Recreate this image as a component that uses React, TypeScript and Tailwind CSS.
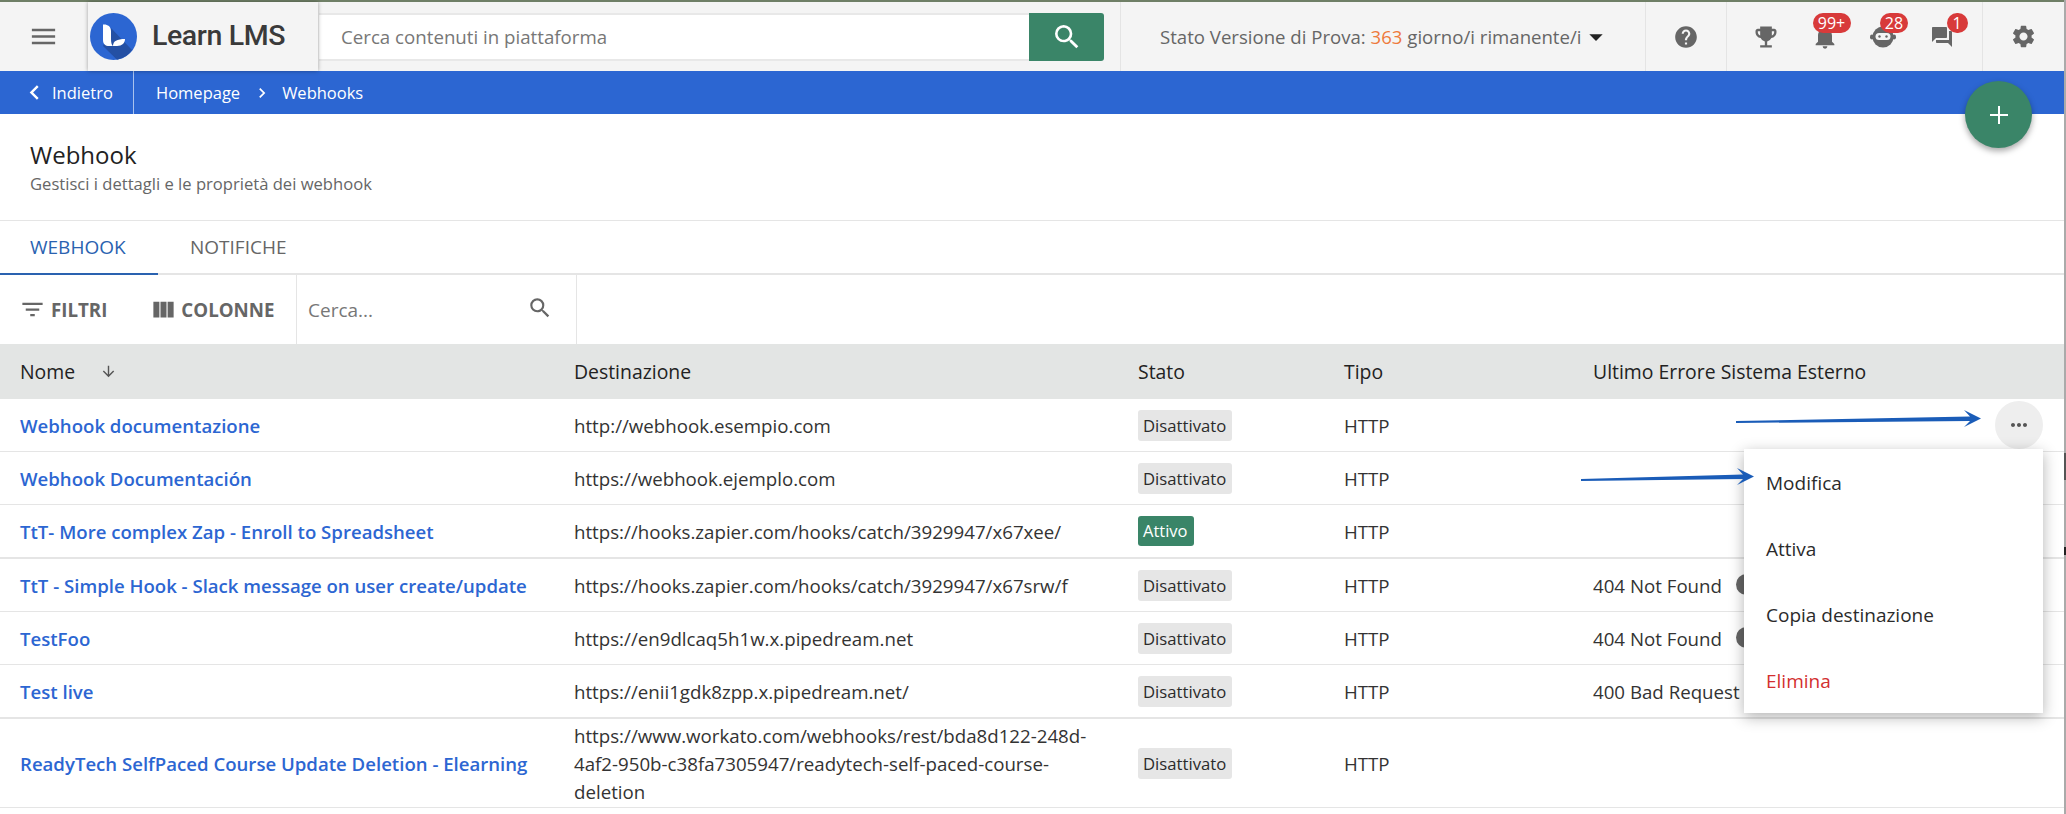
import {
  MdArrowDownward,
  MdArrowDropDown,
  MdChevronLeft,
  MdChevronRight,
  MdEmojiEvents,
  MdFilterList,
  MdForum,
  MdHelp,
  MdMenu,
  MdMoreHoriz,
  MdNotifications,
  MdSearch,
  MdSettings,
  MdViewColumn,
} from "react-icons/md";

interface Webhook {
  name: string;
  destination: string;
  active?: boolean;
  error?: string;
  errorDot?: boolean;
  thick?: boolean;
}

const webhooks: Webhook[] = [
  { name: "Webhook documentazione", destination: "http://webhook.esempio.com" },
  { name: "Webhook Documentación", destination: "https://webhook.ejemplo.com" },
  {
    name: "TtT- More complex Zap - Enroll to Spreadsheet",
    destination: "https://hooks.zapier.com/hooks/catch/3929947/x67xee/",
    active: true,
    thick: true,
  },
  {
    name: "TtT - Simple Hook - Slack message on user create/update",
    destination: "https://hooks.zapier.com/hooks/catch/3929947/x67srw/f",
    error: "404 Not Found",
    errorDot: true,
  },
  {
    name: "TestFoo",
    destination: "https://en9dlcaq5h1w.x.pipedream.net",
    error: "404 Not Found",
    errorDot: true,
  },
  {
    name: "Test live",
    destination: "https://enii1gdk8zpp.x.pipedream.net/",
    error: "400 Bad Request",
    thick: true,
  },
  {
    name: "ReadyTech SelfPaced Course Update Deletion - Elearning",
    destination:
      "https://www.workato.com/webhooks/rest/bda8d122-248d-4af2-950b-c38fa7305947/readytech-self-paced-course-deletion",
  },
];

function LogoMark() {
  return (
    <svg width="47" height="47" viewBox="0 0 47 47">
      <circle cx="23.5" cy="23.5" r="23.5" fill="#2c66d2" />
      <path d="M21 15 L42 37 A23.5 23.5 0 0 1 27 46.7 L13 33 Z" fill="#2450a4" />
      <path d="M13 11.5 C17 11 21 13 21 18 V26 C21 29 21.5 32 23 33 H19 C15.5 33 13 31 13 27 Z" fill="#fff" />
      <path d="M23 33 C23 28 27 26 35 26 C35 30 32 33 27 33 Z" fill="#fff" />
    </svg>
  );
}

function BotIcon() {
  return (
    <svg width="26" height="22" viewBox="0 0 26 22">
      <circle cx="13" cy="11" r="10.5" fill="#666" />
      <rect x="0" y="8.5" width="4" height="5" rx="2" fill="#666" />
      <rect x="22" y="8.5" width="4" height="5" rx="2" fill="#666" />
      <rect x="5.5" y="7" width="15" height="7" rx="3.5" fill="#f4f4f4" />
      <circle cx="9.5" cy="10.5" r="1.2" fill="#666" />
      <circle cx="16.5" cy="10.5" r="1.2" fill="#666" />
    </svg>
  );
}

function Annotation({ className, width }: { className: string; width: number }) {
  return (
    <svg
      className={`absolute pointer-events-none ${className}`}
      width={width}
      height="20"
      viewBox={`0 0 ${width} 20`}
    >
      <path
        d={`M0 12 L${width - 11} 7.5 L${width - 17} 1 L${width} 9.5 L${width - 17} 18 L${width - 11} 12 L0 14 Z`}
        fill="#1a5cb8"
      />
    </svg>
  );
}

function Badge({ className, children }: { className: string; children: string }) {
  return (
    <span
      className={`absolute top-[11px] h-[20px] rounded-full bg-[#d83a3a] text-white text-[16px] leading-[20px] text-center ${className}`}
    >
      {children}
    </span>
  );
}

function StatusChip({ active }: { active?: boolean }) {
  return active ? (
    <span className="inline-block rounded-[3px] bg-[#3a8568] text-white text-[16.5px] leading-[30px] pl-[5px] pr-[6px]">
      Attivo
    </span>
  ) : (
    <span className="inline-block rounded-[3px] bg-[#e6e6e6] text-[#2b2b2b] font-medium text-[16.7px] leading-[31px] pl-[5px] pr-[6px]">
      Disattivato
    </span>
  );
}

export default function App() {
  return (
    <div className="relative flex w-[2066px] h-[814px] overflow-hidden bg-white font-['Open_Sans',sans-serif] text-[#333]">
      <div className="w-[2064px] shrink-0 flex flex-col">
        {/* Top bar */}
        <header className="flex h-[71px] shrink-0 bg-[#f4f4f4] border-t-2 border-[#6f7f66]">
          <div className="w-[88px] flex items-center pl-[28px] text-[#666]">
            <MdMenu size={31} />
          </div>
          <div className="w-[230px] z-10 flex items-center gap-[15px] pl-[2px] bg-[#f4f4f4] shadow-[0_0_4px_rgba(0,0,0,0.35)]">
            <LogoMark />
            <span className="font-['Roboto',sans-serif] font-medium text-[28.5px] tracking-[-0.4px] text-[#3a3a3a]">
              Learn LMS
            </span>
          </div>
          <div className="w-[710px] ml-[1px] mt-[11px] h-[48px] bg-white border-y-2 border-[#e8e8e8] flex items-center pl-[22px] text-[18.7px] text-[#777]">
            Cerca contenuti in piattaforma
          </div>
          <div className="w-[75px] mt-[11px] h-[48px] bg-[#3a8568] rounded-r-[3px] flex items-center justify-center text-white">
            <MdSearch size={32} />
          </div>
          <div className="ml-[16px] w-[526px] border-x border-[#e4e4e4] flex items-center pl-[39px] text-[18.6px] text-[#666]">
            <span>
              Stato Versione di Prova: <span className="text-[#ee7a3c]">363</span> giorno/i rimanente/i
            </span>
            <MdArrowDropDown size={32} className="text-[#222] -ml-[1px]" />
          </div>
          <div className="w-[80px] flex items-center justify-center text-[#666]">
            <MdHelp size={26} />
          </div>
          <div className="w-[257px] border-x border-[#e4e4e4] flex items-center pl-[10px] text-[#666]">
            <div className="relative w-[58.5px] flex justify-center">
              <MdEmojiEvents size={28} />
            </div>
            <div className="relative w-[58.5px] h-full flex items-center justify-center">
              <MdNotifications size={28} />
              <Badge className="left-[17px] w-[38px]">99+</Badge>
            </div>
            <div className="relative w-[58.5px] h-full flex items-center justify-center">
              <BotIcon />
              <Badge className="left-[26px] w-[28px]">28</Badge>
            </div>
            <div className="relative w-[58.5px] h-full flex items-center justify-center">
              <MdForum size={24} />
              <Badge className="left-[34px] w-[21px]">1</Badge>
            </div>
          </div>
          <div className="flex-1 flex items-center pl-[27px] text-[#666]">
            <MdSettings size={27} />
          </div>
        </header>

        {/* Breadcrumb */}
        <nav className="flex h-[43px] shrink-0 items-center bg-[#2c66d2] text-white text-[16.5px] font-medium">
          <div className="w-[134px] h-full flex items-center pl-[20px] border-r border-[#a9c2ee]">
            <MdChevronLeft size={29} className="mr-[3px]" />
            <span className="pt-[1px]">Indietro</span>
          </div>
          <span className="ml-[22px] pt-[1px]">Homepage</span>
          <MdChevronRight size={20} className="ml-[12px] mr-[10px]" />
          <span className="pt-[1px]">Webhooks</span>
        </nav>

        {/* Title */}
        <div className="h-[107px] shrink-0 pl-[30px] pt-[23px] border-b border-[#e5e5e5]">
          <h1 className="text-[24px] leading-[36px] text-[#222]">Webhook</h1>
          <p className="text-[16.6px] leading-[22px] text-[#666]">
            Gestisci i dettagli e le proprietà dei webhook
          </p>
        </div>

        {/* Tabs */}
        <div className="flex h-[54px] shrink-0 border-b-2 border-[#e5e5e5] text-[19px]">
          <div className="w-[158px] h-[54px] flex items-center pl-[30px] text-[#2a62b0] border-b-2 border-[#2a62b0]">
            WEBHOOK
          </div>
          <div className="flex items-center pl-[32px] text-[#666]">NOTIFICHE</div>
        </div>

        {/* Toolbar */}
        <div className="flex h-[69px] shrink-0 text-[#666]">
          <div className="w-[297px] flex items-center border-r border-[#e5e5e5] pl-[19px] font-bold text-[18.7px]">
            <MdFilterList size={27} />
            <span className="ml-[5px] pt-[2px]">FILTRI</span>
            <MdViewColumn size={27} className="ml-[43px]" />
            <span className="ml-[4px] pt-[2px]">COLONNE</span>
          </div>
          <div className="w-[280px] flex items-center justify-between border-r border-[#e5e5e5] pl-[11px] pr-[23px] text-[19px] text-[#777]">
            <span className="pt-[2px]">Cerca...</span>
            <MdSearch size={26} className="text-[#666] -mt-[3px]" />
          </div>
        </div>

        {/* Table */}
        <div className="grid grid-cols-[574px_564px_206px_249px_1fr] h-[55px] shrink-0 items-center bg-[#e3e5e4] text-[19.4px] text-[#222]">
          <div className="pl-[20px] flex items-center">
            Nome
            <MdArrowDownward size={17} className="ml-[25px] text-[#555]" />
          </div>
          <div>Destinazione</div>
          <div>Stato</div>
          <div>Tipo</div>
          <div>Ultimo Errore Sistema Esterno</div>
        </div>
        {webhooks.map((hook, i) => (
          <div
            key={hook.name}
            className={`grid grid-cols-[574px_564px_206px_249px_1fr] shrink-0 items-center border-[#e5e5e5] text-[18.7px] ${
              hook.thick ? "border-b-2" : "border-b"
            } ${i === 6 ? "h-[89px]" : hook.thick ? "h-[54px]" : "h-[53px]"}`}
          >
            <div className="pl-[20px] pt-[2px] font-semibold text-[18.6px] text-[#2c66d2]">{hook.name}</div>
            <div className="w-[525px] pt-[2px] leading-[28px]">{hook.destination}</div>
            <div className="flex">
              <StatusChip active={hook.active} />
            </div>
            <div className="pt-[2px]">HTTP</div>
            <div className="flex items-center pr-[21px]">
              {hook.error && <span className="pt-[2px]">{hook.error}</span>}
              {hook.errorDot && <span className="ml-[14px] size-[21px] rounded-full bg-[#666]" />}
              {i === 0 && (
                <button className="ml-auto size-[48px] rounded-full bg-[#eeeeee] flex items-center justify-center text-[#555]">
                  <MdMoreHoriz size={24} />
                </button>
              )}
            </div>
          </div>
        ))}
      </div>
      <div className="w-[2px] bg-[#aaaaaa]" />

      {/* Screenshot edge marks */}
      <div className="absolute left-[2064px] top-[453px] w-[2px] h-[27px] bg-[#555]" />
      <div className="absolute left-[2064px] top-[547px] w-[2px] h-[8px] bg-[#222]" />

      {/* Floating button */}
      <button className="absolute left-[1965px] top-[81px] size-[67px] rounded-full bg-[#3a8568] text-white flex items-center justify-center shadow-[0_3px_6px_rgba(0,0,0,0.35)]">
        <svg width="24" height="24" viewBox="0 0 24 24">
          <path d="M12 3 V21 M3 12 H21" stroke="#fff" strokeWidth="2" />
        </svg>
      </button>

      {/* Row menu */}
      <div className="absolute left-[1744px] top-[449px] w-[299px] h-[264px] bg-white flex flex-col shadow-[0_4px_14px_rgba(0,0,0,0.3)] text-[19px] font-medium text-[#2b2b2b]">
        <div className="h-[66px] flex items-center pl-[22px] pt-[2px]">Modifica</div>
        <div className="h-[66px] flex items-center pl-[22px] pt-[2px]">Attiva</div>
        <div className="h-[66px] flex items-center pl-[22px] pt-[2px]">Copia destinazione</div>
        <div className="h-[66px] flex items-center pl-[22px] pt-[2px] text-[#d32f2f]">Elimina</div>
      </div>

      {/* Annotation arrows */}
      <Annotation className="left-[1736px] top-[409px]" width={245} />
      <Annotation className="left-[1581px] top-[467px]" width={173} />
    </div>
  );
}
